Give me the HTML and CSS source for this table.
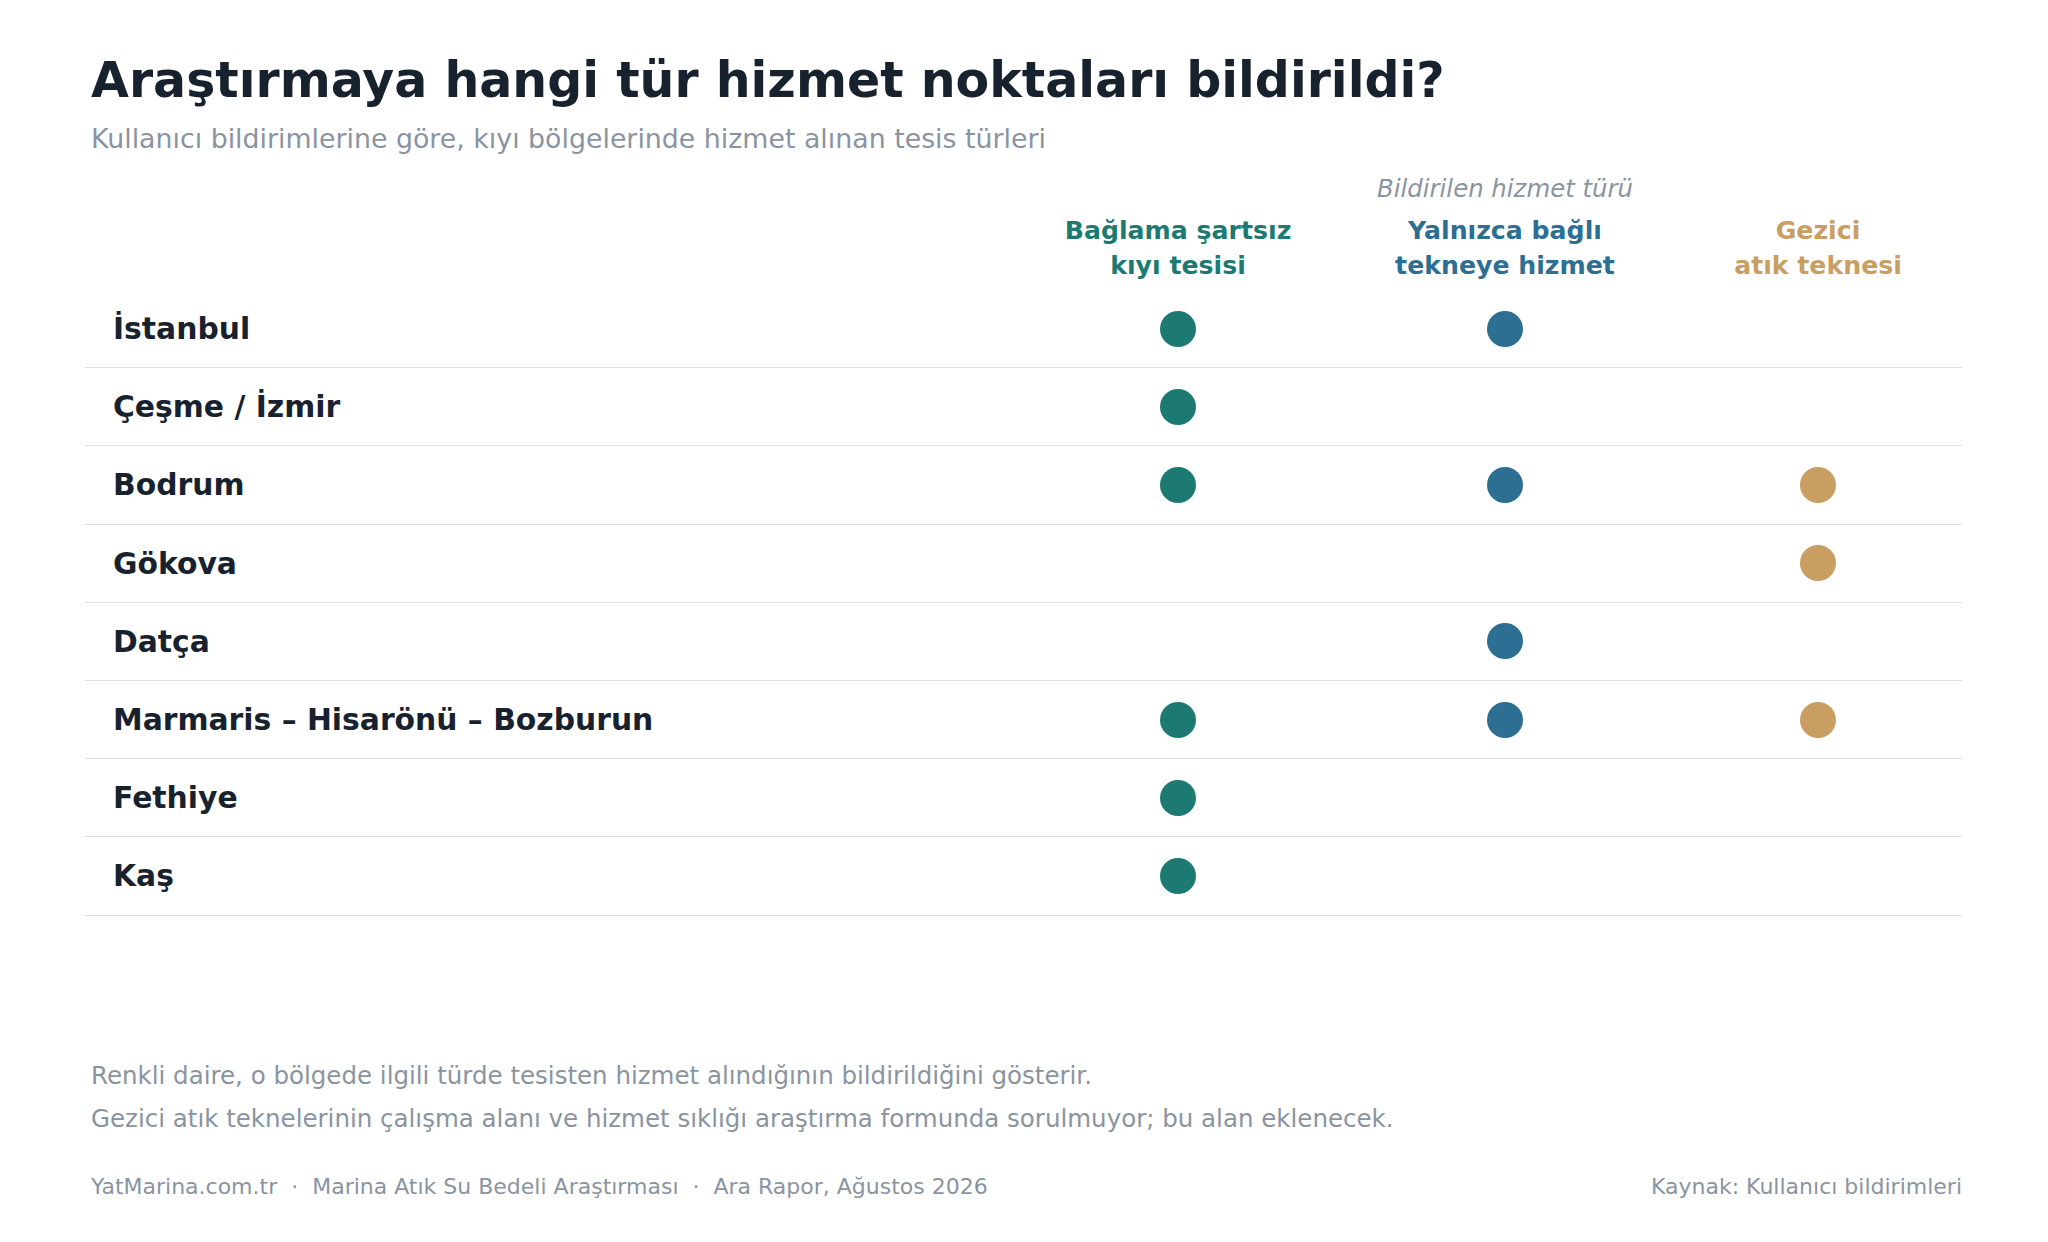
FILE: index.html
```html
<!DOCTYPE html>
<html lang="tr">
<head>
<meta charset="utf-8">
<title>Hizmet noktaları</title>
<link rel="stylesheet" href="styles.css">
</head>
<body>
<main class="page">
  <header class="head">
    <h1 class="title">Araştırmaya hangi tür hizmet noktaları bildirildi?</h1>
    <p class="subtitle">Kullanıcı bildirimlerine göre, kıyı bölgelerinde hizmet alınan tesis türleri</p>
  </header>

  <section class="matrix">
    <div class="group-row">
      <span class="group-label">Bildirilen hizmet türü</span>
    </div>
    <div class="row col-head">
      <span></span>
      <span class="ch teal">Bağlama şartsız<br>kıyı tesisi</span>
      <span class="ch blue">Yalnızca bağlı<br>tekneye hizmet</span>
      <span class="ch tan">Gezici<br>atık teknesi</span>
    </div>

    <div class="row data"><span class="name">İstanbul</span><span class="cell"><i class="dot teal-bg"></i></span><span class="cell"><i class="dot blue-bg"></i></span><span class="cell"></span></div>
    <div class="row data"><span class="name">Çeşme / İzmir</span><span class="cell"><i class="dot teal-bg"></i></span><span class="cell"></span><span class="cell"></span></div>
    <div class="row data"><span class="name">Bodrum</span><span class="cell"><i class="dot teal-bg"></i></span><span class="cell"><i class="dot blue-bg"></i></span><span class="cell"><i class="dot tan-bg"></i></span></div>
    <div class="row data"><span class="name">Gökova</span><span class="cell"></span><span class="cell"></span><span class="cell"><i class="dot tan-bg"></i></span></div>
    <div class="row data"><span class="name">Datça</span><span class="cell"></span><span class="cell"><i class="dot blue-bg"></i></span><span class="cell"></span></div>
    <div class="row data"><span class="name">Marmaris – Hisarönü – Bozburun</span><span class="cell"><i class="dot teal-bg"></i></span><span class="cell"><i class="dot blue-bg"></i></span><span class="cell"><i class="dot tan-bg"></i></span></div>
    <div class="row data"><span class="name">Fethiye</span><span class="cell"><i class="dot teal-bg"></i></span><span class="cell"></span><span class="cell"></span></div>
    <div class="row data"><span class="name">Kaş</span><span class="cell"><i class="dot teal-bg"></i></span><span class="cell"></span><span class="cell"></span></div>
  </section>

  <section class="notes">
    <p>Renkli daire, o bölgede ilgili türde tesisten hizmet alındığının bildirildiğini gösterir.</p>
    <p>Gezici atık teknelerinin çalışma alanı ve hizmet sıklığı araştırma formunda sorulmuyor; bu alan eklenecek.</p>
  </section>

  <footer class="foot">
    <span>YatMarina.com.tr &nbsp;·&nbsp; Marina Atık Su Bedeli Araştırması &nbsp;·&nbsp; Ara Rapor, Ağustos 2026</span>
    <span>Kaynak: Kullanıcı bildirimleri</span>
  </footer>
</main>
</body>
</html>
```

FILE: styles.css
```css
* { box-sizing: border-box; }
html, body { margin: 0; padding: 0; background: #ffffff; }
body {
  font-family: "DejaVu Sans", "Noto Sans", sans-serif;
  color: #17222e;
}
.page {
  width: 2048px;
  height: 1242px;
  padding: 52px 86px 0 85px;
  display: flex;
  flex-direction: column;
}
.head { padding-left: 6px; }
.title {
  margin: 0;
  font-size: 49px;
  line-height: 58px;
  font-weight: 700;
  color: #17222e;
}
.subtitle {
  margin: 13px 0 0;
  font-size: 26.8px;
  line-height: 32px;
  color: #8a94a1;
}
.matrix { margin-top: 15px; }
.row {
  display: grid;
  grid-template-columns: 1fr 316px 338px 288px;
  align-items: center;
}
.group-row {
  display: grid;
  grid-template-columns: 1fr 316px 338px 288px;
  height: 36px;
  align-items: center;
}
.group-label {
  grid-column: 3;
  text-align: center;
  font-style: italic;
  font-size: 24.4px;
  color: #8a94a1;
}
.col-head {
  height: 84px;
  align-items: start;
  padding-top: 7px;
}
.ch {
  text-align: center;
  font-weight: 700;
  font-size: 25.2px;
  line-height: 35px;
}
.teal { color: #1d7a72; }
.blue { color: #2d6e93; }
.tan { color: #c89e62; }
.data {
  height: 78.2px;
  border-bottom: 1.2px solid #dcdfe4;
}
.name {
  padding-left: 28px;
  font-size: 29.8px;
  font-weight: 700;
  color: #17222e;
}
.cell { display: flex; justify-content: center; align-items: center; }
.dot {
  display: block;
  width: 36px;
  height: 36px;
  border-radius: 50%;
}
.teal-bg { background: #1d7a72; }
.blue-bg { background: #2d6e93; }
.tan-bg { background: #c89e62; }
.notes {
  margin-top: auto;
  padding-left: 6px;
  color: #8a94a1;
  font-size: 24.5px;
  line-height: 43px;
}
.notes p { margin: 0; }
.foot {
  display: flex;
  justify-content: space-between;
  padding-left: 6px;
  margin-top: 32px;
  margin-bottom: 40px;
  font-size: 22px;
  line-height: 30px;
  color: #8a94a1;
}
```
